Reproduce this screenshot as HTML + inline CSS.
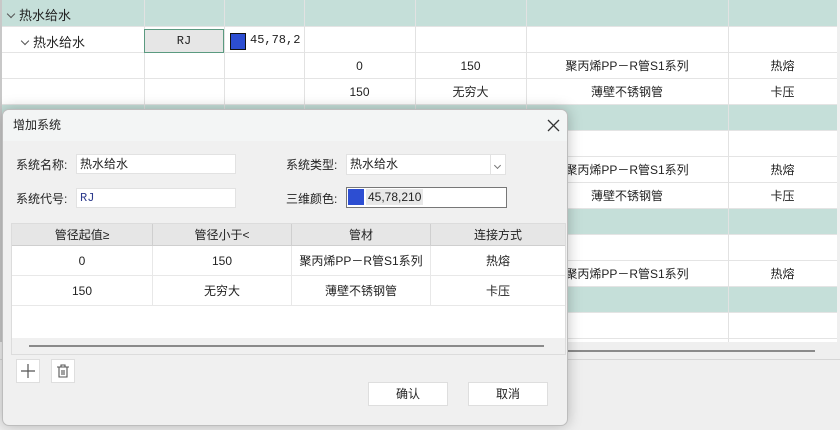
<!DOCTYPE html>
<html><head><meta charset="utf-8"><style>
*{box-sizing:border-box;margin:0;padding:0}
body{width:840px;height:430px;overflow:hidden;background:#efefef;font-family:"Liberation Sans","Noto Sans CJK SC",sans-serif;font-size:12px;color:#222;position:relative}
.bg{position:absolute;left:0;top:0;width:837px;height:342px;background:#fff;border-left:2px solid #c8c8c8}
.row{position:absolute;left:0;width:835px;height:26px;border-bottom:1px solid #e4e4e4}
.teal{background:#c5dfd9}
.vl{position:absolute;top:0;width:1px;height:342px;background:#e2e2e2}
.c{position:absolute;text-align:center;line-height:26px}
.dlg{position:absolute;left:2px;top:109px;width:566px;height:317px;background:#f0f0f0;border:1px solid #bdbdbd;border-radius:7px;box-shadow:0 0 14px rgba(0,0,0,.25);overflow:hidden}
.tb{height:31px;background:#f3f5f5;line-height:30px;padding-left:10px;font-size:12px}
.lbl{position:absolute;font-size:12px}
.inp{position:absolute;background:#fff;border:1px solid #e2e2e2;height:20px;line-height:18px;padding-left:3px}
.tbl{position:absolute;left:8px;top:113px;width:555px;height:132px;background:#fff;border:1px solid #dcdcdc}
.th{position:absolute;top:0;height:22px;background:#e6e6e6;line-height:22px;text-align:center;border-right:1px solid #cfcfcf;border-bottom:1px solid #cfcfcf}
.td{position:absolute;height:30px;line-height:30px;text-align:center;border-right:1px solid #e8e8e8;border-bottom:1px solid #e8e8e8}
.btn{position:absolute;background:#fff;border:1px solid #dedede;text-align:center}
.chev{display:inline-block;width:6px;height:6px;border-right:1px solid #555;border-bottom:1px solid #555;transform:rotate(45deg);margin:0 5px 3px 2px}
</style></head><body>
<div class="bg">
<div class="row teal" style="top:0;height:27px"></div>
<div class="row" style="top:27px"></div>
<div class="row" style="top:53px"></div>
<div class="row" style="top:79px"></div>
<div class="row teal" style="top:105px"></div>
<div class="row" style="top:131px"></div>
<div class="row" style="top:157px"></div>
<div class="row" style="top:183px"></div>
<div class="row teal" style="top:209px"></div>
<div class="row" style="top:235px"></div>
<div class="row" style="top:261px"></div>
<div class="row teal" style="top:287px"></div>
<div class="row" style="top:313px"></div>
<div class="vl" style="left:142px"></div><div class="vl" style="left:222px"></div><div class="vl" style="left:302px"></div><div class="vl" style="left:413px"></div><div class="vl" style="left:524px"></div><div class="vl" style="left:726px"></div>
<div style="position:absolute;left:4px;top:5px;font-size:13px"><span class="chev"></span>热水给水</div>
<div style="position:absolute;left:18px;top:32px;font-size:13px"><span class="chev"></span>热水给水</div>
<div style="position:absolute;left:142px;top:29px;width:80px;height:24px;background:#e6e6e6;border:1px solid #5a9a80;text-align:center;line-height:22px;font-family:'Liberation Mono',monospace">RJ</div>
<div style="position:absolute;left:228px;top:33px;width:16px;height:17px;background:#2d4ed2;border:1px solid #111"></div>
<div style="position:absolute;left:248px;top:33px;font-family:'Liberation Mono',monospace;font-size:12px">45,78,2</div>
<div class="c" style="left:302px;width:111px;top:53px">0</div><div class="c" style="left:413px;width:111px;top:53px">150</div><div class="c" style="left:524px;width:202px;top:53px">聚丙烯PP－R管S1系列</div><div class="c" style="left:726px;width:109px;top:53px">热熔</div>
<div class="c" style="left:302px;width:111px;top:79px">150</div><div class="c" style="left:413px;width:111px;top:79px">无穷大</div><div class="c" style="left:524px;width:202px;top:79px">薄壁不锈钢管</div><div class="c" style="left:726px;width:109px;top:79px">卡压</div>
<div class="c" style="left:524px;width:202px;top:157px">聚丙烯PP－R管S1系列</div><div class="c" style="left:726px;width:109px;top:157px">热熔</div>
<div class="c" style="left:524px;width:202px;top:183px">薄壁不锈钢管</div><div class="c" style="left:726px;width:109px;top:183px">卡压</div>
<div class="c" style="left:524px;width:202px;top:261px">聚丙烯PP－R管S1系列</div><div class="c" style="left:726px;width:109px;top:261px">热熔</div>
</div>
<div style="position:absolute;left:540px;top:350px;width:275px;height:2px;background:#8a8a8a"></div>
<div style="position:absolute;left:0;top:359px;width:840px;height:1px;background:#d6d6d6"></div>

<div class="dlg">
<div class="tb">增加系统</div>
<svg style="position:absolute;left:544px;top:9px" width="13" height="13"><path d="M1 1L12 12M12 1L1 12" stroke="#333" stroke-width="1.3"/></svg>
<div class="lbl" style="left:13px;top:46px">系统名称:</div>
<div class="inp" style="left:73px;top:44px;width:160px">热水给水</div>
<div class="lbl" style="left:283px;top:46px">系统类型:</div>
<div class="inp" style="left:343px;top:44px;width:160px;height:21px">热水给水<span style="position:absolute;right:0;top:0;width:15px;height:19px;border-left:1px solid #e2e2e2"><span class="chev" style="margin:4px 0 0 4px;width:5px;height:5px;border-color:#777"></span></span></div>
<div class="lbl" style="left:13px;top:80px">系统代号:</div>
<div class="inp" style="left:73px;top:78px;width:160px;color:#2d3a8c;font-family:'Liberation Mono',monospace">RJ</div>
<div class="lbl" style="left:283px;top:80px">三维颜色:</div>
<div class="inp" style="left:343px;top:77px;width:161px;height:21px;border:1px solid #777;padding:1px">
<span style="display:inline-block;width:16px;height:16px;background:#2d4ed2;vertical-align:top"></span><span style="display:inline-block;background:#e8e8e8;padding:0 2px;line-height:16px;vertical-align:top;margin-left:2px">45,78,210</span></div>
<div class="tbl">
<div class="th" style="left:0;width:141px">管径起值≥</div>
<div class="th" style="left:141px;width:139px">管径小于&lt;</div>
<div class="th" style="left:280px;width:139px">管材</div>
<div class="th" style="left:419px;width:134px;border-right:none">连接方式</div>
<div class="td" style="left:0;top:22px;width:141px">0</div><div class="td" style="left:141px;top:22px;width:139px">150</div><div class="td" style="left:280px;top:22px;width:139px">聚丙烯PP－R管S1系列</div><div class="td" style="left:419px;top:22px;width:134px;border-right:none">热熔</div>
<div class="td" style="left:0;top:52px;width:141px">150</div><div class="td" style="left:141px;top:52px;width:139px">无穷大</div><div class="td" style="left:280px;top:52px;width:139px">薄壁不锈钢管</div><div class="td" style="left:419px;top:52px;width:134px;border-right:none">卡压</div>
<div style="position:absolute;left:0;top:114px;width:553px;height:16px;background:#f0f0f0"></div>
<div style="position:absolute;left:17px;top:121px;width:515px;height:2px;background:#8a8a8a"></div>
</div>
<div class="btn" style="left:13px;top:249px;width:24px;height:24px"><svg width="22" height="22"><path d="M11 4V18M4 11H18" stroke="#555" stroke-width="1.2"/></svg></div>
<div class="btn" style="left:48px;top:249px;width:24px;height:24px"><svg width="22" height="22"><path d="M5 7H17M9 7V5H13V7M7 7V17H15V7M10 10V15M12 10V15" stroke="#555" stroke-width="1.1" fill="none"/></svg></div>
<div class="btn" style="left:365px;top:272px;width:80px;height:24px;line-height:22px">确认</div>
<div class="btn" style="left:465px;top:272px;width:80px;height:24px;line-height:22px">取消</div>
</div>
</body></html>
